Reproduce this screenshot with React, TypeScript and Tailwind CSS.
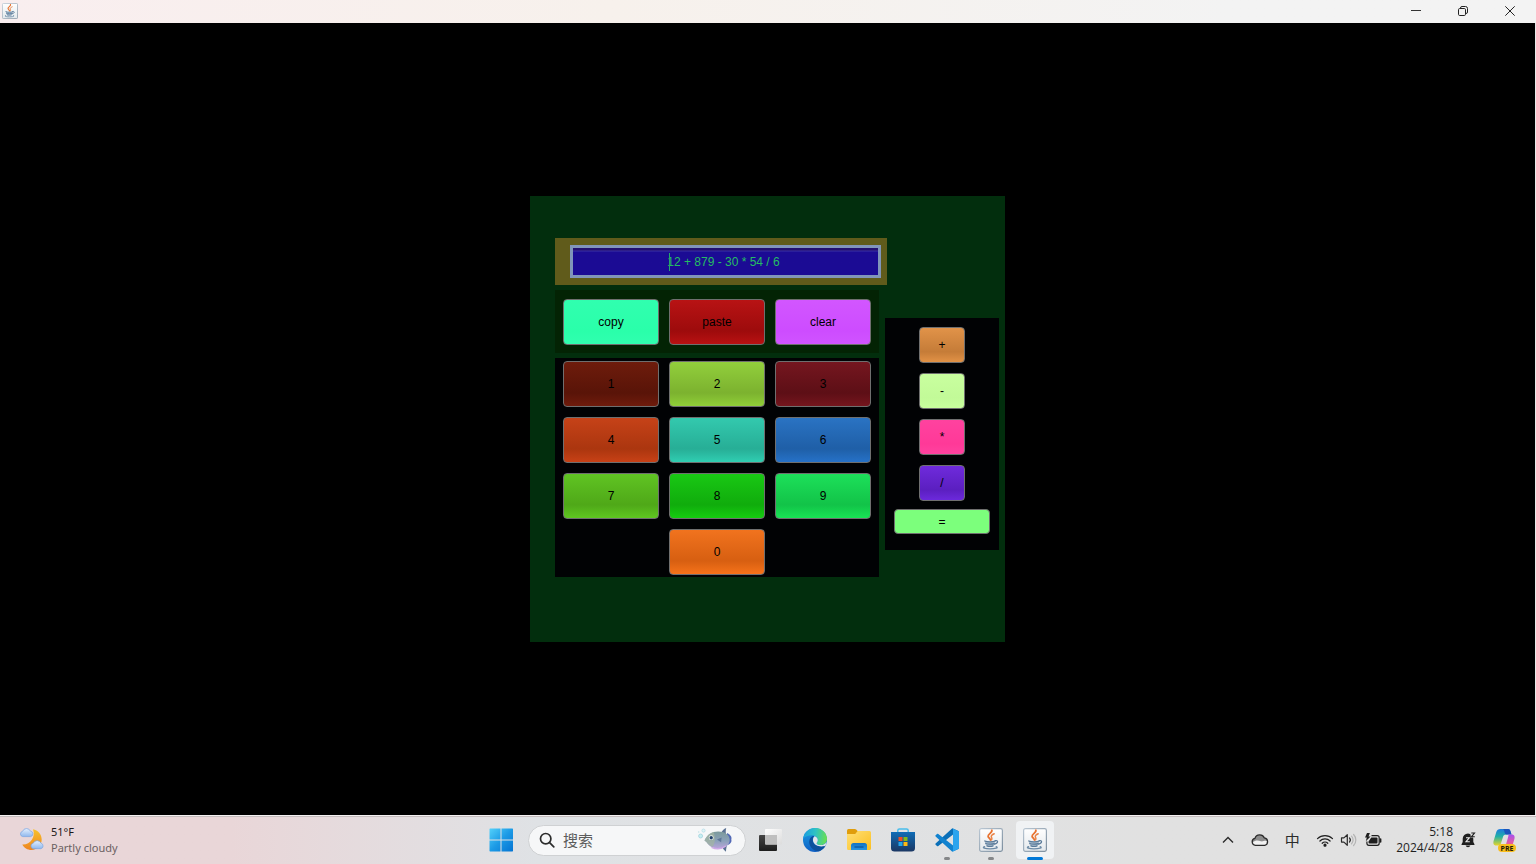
import { useState } from "react";
import type { ReactNode } from "react";

function JavaIcon({ className }: { className: string }) {
  return (
    <svg viewBox="0 0 24 24" className={className} aria-hidden="true">
      <defs>
        <linearGradient id="javaBg" x1="0" y1="0" x2="0" y2="1">
          <stop offset="0" stopColor="#ffffff" />
          <stop offset="1" stopColor="#e3e8ec" />
        </linearGradient>
        <linearGradient id="javaEdge" x1="0" y1="0" x2="1" y2="1">
          <stop offset="0" stopColor="#b9c6d2" />
          <stop offset="1" stopColor="#7d8f9f" />
        </linearGradient>
      </defs>
      <rect x=".6" y=".6" width="22.8" height="22.8" rx="1.8" fill="url(#javaBg)" stroke="url(#javaEdge)" strokeWidth="1.200" />
      <path d="M12.800 2.200c1.100 2.400-4 3.700-3.700 6.100.2 1.500 2 2.200 2.400 3.700" fill="none" stroke="#e8722f" strokeWidth="1.800" strokeLinecap="round" />
      <path d="M15.200 5.800c-2 .9-3.500 1.900-2.800 3.300.5 1 .9 1.500.2 2.700" fill="none" stroke="#ea8448" strokeWidth="1.500" strokeLinecap="round" />
      <path d="M5.800 12.800c2 1.200 8.600 1.200 10.400 0-.1 2.700-.9 4.600-2.300 5.600H8.100c-1.400-1-2.200-2.900-2.300-5.600z" fill="#a9bccd" />
      <path d="M5.800 13c2.200 1.100 8.200 1.100 10.400 0M6.800 15.500c1.900.8 6.500.8 8.400.1M8 17.900c1.700.6 4.400.6 6 0" fill="none" stroke="#5b7b9a" strokeWidth="1.300" strokeLinecap="round" />
      <path d="M16.200 12.700c3.100-.8 3.400 2.500-.7 3.500" fill="none" stroke="#5b7b9a" strokeWidth="1.300" strokeLinecap="round" />
      <path d="M5.600 18.700c-3.200 1 .5 2.100 5.400 2.100s9.200-.9 6.200-2.200" fill="none" stroke="#6c8aa6" strokeWidth="1.300" strokeLinecap="round" />
    </svg>
  );
}

function WeatherIcon() {
  return (
    <svg viewBox="0 0 26 24" className="h-6 w-[26px]" aria-hidden="true">
      <defs>
        <linearGradient id="moon" x1="0" y1="0" x2="0" y2="1">
          <stop offset="0" stopColor="#f7c22c" />
          <stop offset="1" stopColor="#ee8420" />
        </linearGradient>
        <linearGradient id="cloud" x1="0" y1="0" x2="0" y2="1">
          <stop offset="0" stopColor="#e6f0fd" />
          <stop offset="1" stopColor="#8fb8ee" />
        </linearGradient>
      </defs>
      <path d="M14 1.300c5 .8 8.700 5.100 8.700 10.300 0 5.800-4.500 10.400-10.200 10.400-4 0-7.500-2.200-9.200-5.500C11 17 17 9.500 14 1.300z" fill="url(#moon)" />
      <path d="M3.700 8.600a2.700 2.700 0 0 1-.1-5.300 4.200 4.200 0 0 1 7.800-.2 2.800 2.800 0 0 1 .3 5.500z" fill="url(#cloud)" stroke="#79a5e3" strokeWidth=".7" />
      <path d="M14.300 20.700a2.800 2.800 0 0 1-.1-5.500 4.300 4.300 0 0 1 7.900.1 2.800 2.800 0 0 1-.2 5.400z" fill="url(#cloud)" stroke="#79a5e3" strokeWidth=".7" />
    </svg>
  );
}

function WindowsIcon() {
  return (
    <svg viewBox="0 0 24 24" className="size-6" aria-hidden="true">
      <defs>
        <linearGradient id="win" gradientUnits="userSpaceOnUse" x1="0" y1="0" x2="24" y2="24">
          <stop offset="0" stopColor="#56d3fb" />
          <stop offset=".5" stopColor="#1c9be6" />
          <stop offset="1" stopColor="#0473d2" />
        </linearGradient>
      </defs>
      <path fill="url(#win)" d="M1 .5h10.500v11H.5V1zM12.500.5H23.500l.500.5v10.500H12.500zM.5 12.500h11v11H1L.5 23zM12.500 12.500H24V23l-.5.5h-11z" />
    </svg>
  );
}

function FishIcon() {
  return (
    <svg viewBox="0 0 36 26" className="h-[26px] w-9 shrink-0" aria-hidden="true">
      <defs>
        <linearGradient id="fish" x1="0" y1="0" x2="0" y2="1">
          <stop offset="0" stopColor="#7c9a9b" />
          <stop offset=".55" stopColor="#8aa1ba" />
          <stop offset="1" stopColor="#b9a5da" />
        </linearGradient>
      </defs>
      <path d="M24 6.500c1-2.800 2.900-4.600 5.200-5.500-.7 2.600-.5 5.200 0 7.200zM25 18.500c.7 2.800 2 4.900 4 6.300 0-3 .6-5.100 1-6.600z" fill="#5c7294" />
      <path d="M30 6c4.200 2 5 4.400 4.300 6.500.7 2.400-.6 4.600-4.300 5.700z" fill="#5269b6" />
      <path d="M7.500 13.500C10 7.500 15 4.500 21 4.400c6.500-.1 11.800 3.300 11.700 8.600C32.600 18.700 27 22 20.300 21.500c-6.100-.4-9-3.500-10.700-6.300z" fill="url(#fish)" />
      <path d="M7.500 13.500c1.800-4.400 5-7.300 9-8.500 2.200 4.700 1.800 11-1 15-3-1.200-4.700-3-5.900-4.800z" fill="#a2b4a3" opacity=".75" />
      <path d="M20 12.500l4.600-2-.5 4.700z" fill="#5f7799" />
      <path d="M14.500 20.300c4.800 2.100 10.600 1.400 14.300-1.300" fill="none" stroke="#cfa9e8" strokeWidth="1.400" />
      <circle cx="14.200" cy="10.700" r="2.400" fill="#f0f4ee" />
      <circle cx="14.200" cy="10.700" r="1.700" fill="#20406c" />
      <circle cx="3.600" cy="9" r="2" fill="#c7eef0" stroke="#9bd0dc" strokeWidth=".7" />
      <circle cx="6.500" cy="3.600" r="1.600" fill="#dff5f4" stroke="#a9d4e4" strokeWidth=".6" />
      <circle cx="1.700" cy="5" r=".8" fill="#c3e3e6" />
    </svg>
  );
}

function TaskViewIcon() {
  return (
    <svg viewBox="0 0 26 26" className="size-[26px]" aria-hidden="true">
      <defs>
        <linearGradient id="tvDark" x1="0" y1="0" x2="0" y2="1">
          <stop offset="0" stopColor="#454545" />
          <stop offset="1" stopColor="#1d1d1d" />
        </linearGradient>
        <linearGradient id="tvLight" x1="0" y1="0" x2="1" y2="1">
          <stop offset="0" stopColor="#ffffff" />
          <stop offset="1" stopColor="#dcdcdc" />
        </linearGradient>
      </defs>
      <rect x="1" y="8" width="18" height="16" rx="1" fill="url(#tvDark)" />
      <rect x="7" y="2" width="17" height="15.500" rx="1" fill="url(#tvLight)" />
      <path d="M7 8h12v9.500H8q-1 0-1-1z" fill="#bfbfbf" />
    </svg>
  );
}

function EdgeIcon() {
  return (
    <svg viewBox="0 0 24 24" className="size-6" aria-hidden="true">
      <defs>
        <linearGradient id="edgeTop" x1="0" y1=".4" x2="1" y2=".5">
          <stop offset="0" stopColor="#1a9de0" />
          <stop offset=".5" stopColor="#2fc3c3" />
          <stop offset="1" stopColor="#6be04f" />
        </linearGradient>
        <linearGradient id="edgeSide" x1="0" y1="0" x2="0" y2="1">
          <stop offset="0" stopColor="#1ba0e4" />
          <stop offset="1" stopColor="#0f5fc4" />
        </linearGradient>
      </defs>
      <circle cx="12" cy="12" r="12" fill="url(#edgeSide)" />
      <path d="M.1 11C.8 4.700 6 0 12.200 0 18.800 0 24 5 24 10.800c0 3.900-2.900 6.300-6.200 6.300-2.800 0-4.200-1-4.200-1.900 0-.7 1.200-1.200 1.200-3.200 0-2.500-2.400-4.800-5.800-4.800C5.200 7.200 1.800 8.400.1 11z" fill="url(#edgeTop)" />
      <path d="M9.800 8.100C6.500 9.900 5.800 13.300 6.500 16c1 4 4.700 7.200 9.200 7.300 2.700-1 4.900-2.700 6.500-5.100.3-.5-.1-.8-.6-.6-5 2-10.500-.1-11.600-3.900-.6-2.100-.1-4.200 1.300-5.400z" fill="#0c4f9c" />
      <path d="M13.600 15.200c0 .9 1.400 1.900 4.200 1.900 2.300 0 4.700-1.200 5.800-3.200a12 12 0 0 1-1.300 4.100c-.2.400-.7.300-1 .1-4.600 1.200-9.900-.6-11.100-4.500-.6-2.100 0-4.300 1.400-5.400 1.900.6 3.200 2.200 3.200 3.800 0 2-1.200 2.500-1.200 3.200z" fill="#e2e5e9" />
    </svg>
  );
}

function FolderIcon() {
  return (
    <svg viewBox="0 0 26 24" className="h-6 w-[26px]" aria-hidden="true">
      <defs>
        <linearGradient id="folder" x1="0" y1="0" x2="1" y2="1">
          <stop offset="0" stopColor="#ffdf76" />
          <stop offset="1" stopColor="#fbbf1f" />
        </linearGradient>
        <linearGradient id="folderBlue" x1="0" y1="0" x2="0" y2="1">
          <stop offset="0" stopColor="#1173c4" />
          <stop offset="1" stopColor="#2695e0" />
        </linearGradient>
      </defs>
      <path d="M1 2.500Q1 1 2.500 1h6.300q.8 0 1.400.6L12 3.500V8H1z" fill="#e09d0c" />
      <path d="M1 6h8.200l2-2.500q.4-.5 1-.5h11.300Q25 3 25 4.500v16q0 1.500-1.500 1.500h-21Q1 22 1 20.500z" fill="url(#folder)" />
      <path d="M5 22v-4.500Q5 15 7.500 15h11q2.500 0 2.500 2.500V22z" fill="url(#folderBlue)" />
      <path d="M9 19h8" stroke="#0c5da7" strokeWidth="1.500" strokeLinecap="round" />
    </svg>
  );
}

function StoreIcon() {
  return (
    <svg viewBox="0 0 26 26" className="size-[26px]" aria-hidden="true">
      <defs>
        <linearGradient id="store" x1="0" y1="0" x2="0" y2="1">
          <stop offset="0" stopColor="#0f6cb6" />
          <stop offset="1" stopColor="#1b3763" />
        </linearGradient>
      </defs>
      <path d="M7.800 6V3.600Q7.800 2 9.400 2h7.200q1.600 0 1.600 1.600V6" fill="none" stroke="#48bdeb" strokeWidth="1.500" />
      <path d="M1 5h24v16q0 3.500-3.500 3.500h-17Q1 24.500 1 21z" fill="url(#store)" />
      <path d="M8.500 10h4v4h-4z" fill="#f04e23" />
      <path d="M13.500 10h4v4h-4z" fill="#80ba1b" />
      <path d="M8.500 15h4v4h-4z" fill="#23a6ee" />
      <path d="M13.500 15h4v4h-4z" fill="#fdb813" />
    </svg>
  );
}

function CodeIcon() {
  return (
    <svg viewBox="0 0 24 24" className="size-6" aria-hidden="true">
      <path d="M17.300.2 23 2.800q1 .5 1 1.500L17.800 6.800 3.300 18.100q-.5.400-1 .1L.6 16.700q-.6-.6 0-1.200z" fill="#0a6fb8" />
      <path d="M17.300 23.800 23 21.200q1-.5 1-1.500l-6.200-2.500L3.300 5.900q-.5-.4-1-.1L.6 7.300q-.6.6 0 1.200z" fill="#1182cf" />
      <path d="M17.300 23.800c.5-.3.700-.7.700-1.200V1.400c0-.5-.2-.9-.7-1.200L23 2.900q1 .5 1 1.500v15.200q0 1-1 1.500z" fill="#2ba4ee" />
    </svg>
  );
}

function TrayCloud() {
  return (
    <svg viewBox="0 0 18 14" className="h-[14px] w-[18px]" aria-hidden="true">
      <path d="M4.400 12.300a3.500 3.500 0 0 1-.5-6.900 5.100 5.100 0 0 1 9.500-.5 3.800 3.800 0 0 1 .4 7.400z" fill="#f2f2f2" />
      <path d="M3.900 5.400a5.100 5.100 0 0 1 9.500-.5c1.600 0 2.900 1.200 3.300 3.200-3.400-1.200-4.700.9-6.800.2C7.500 7.500 5 6.500 1.500 9.400 1 7.400 2 5.800 3.900 5.400z" fill="#8c8c8c" />
      <path d="M4.400 12.300a3.500 3.500 0 0 1-.5-6.900 5.100 5.100 0 0 1 9.500-.5 3.800 3.800 0 0 1 .4 7.400z" fill="none" stroke="#2b2b2b" strokeWidth="1.300" />
    </svg>
  );
}

function WifiIcon() {
  return (
    <svg viewBox="0 0 18 14" className="h-[14px] w-[18px]" aria-hidden="true" fill="none" stroke="#1f1f1f" strokeWidth="1.200" strokeLinecap="round">
      <path d="M1.500 5.600a10.700 10.700 0 0 1 15 0M3.900 8a7.300 7.300 0 0 1 10.200 0M6.200 10.300a4 4 0 0 1 5.600 0" />
      <circle cx="9" cy="12.200" r="1" fill="#1f1f1f" />
    </svg>
  );
}

function SpeakerIcon() {
  return (
    <svg viewBox="0 0 18 14" className="h-[14px] w-[18px]" aria-hidden="true" fill="none" strokeWidth="1.200" strokeLinecap="round" strokeLinejoin="round">
      <path d="M1.500 4.900h2.400L7.300 1.700v10.600L3.900 9.100H1.500z" stroke="#2b2b2b" />
      <path d="M9.500 5a3 3 0 0 1 0 4" stroke="#2b2b2b" />
      <path d="M11.500 3.200a5.400 5.400 0 0 1 0 7.600M13.600 1.500a7.900 7.900 0 0 1 0 11" stroke="#b4b4b4" />
    </svg>
  );
}

function BatteryIcon() {
  return (
    <svg viewBox="0 0 18 14" className="h-[14px] w-[18px]" aria-hidden="true">
      <path d="M7.500 2.700h5.700q2 0 2 2v5.600q0 2-2 2H4.900q-2 0-2-2V8.600" fill="none" stroke="#1f1f1f" strokeWidth="1.200" />
      <path d="M7.300 4.400h5.200q1 0 1 1v4.200q0 1-1 1h-7q-1 0-1-1V8.400z" fill="#1f1f1f" />
      <path d="M16.600 6v3" stroke="#1f1f1f" strokeWidth="1.600" strokeLinecap="round" />
      <path d="M3 0 1 4.600h1.800L1.800 8.200 6.600 3.500H4.500L5.900 0z" fill="#1f1f1f" />
    </svg>
  );
}

function BellIcon() {
  return (
    <svg viewBox="0 0 16 18" className="h-[18px] w-4" aria-hidden="true">
      <path d="M7 2.500a5.300 5.300 0 0 0-5.300 5.300V11L.5 13.300q-.2.600.4.700h12.200q.6-.1.400-.7L12.300 11V7.800A5.300 5.300 0 0 0 7 2.500z" fill="#1f1f1f" />
      <path d="M4.600 14.500a2.500 2.500 0 0 0 4.800 0z" fill="#1f1f1f" />
      <path d="M9.300 1H15v5.500h-5.200z" fill="#e1e1e1" />
      <path d="M10.300 2h3.200l-3.100 3.800h3.400" fill="none" stroke="#1f1f1f" strokeWidth="1.100" />
      <path d="M5 6.700h3.400L5 10.700h3.800" fill="none" stroke="#ececec" strokeWidth="1.100" />
    </svg>
  );
}

function CopilotIcon() {
  return (
    <span className="relative block h-6 w-6">
      <svg viewBox="0 0 24 24" className="size-6" aria-hidden="true">
        <defs>
          <linearGradient id="copA" x1="0" y1="0" x2="0" y2="1">
            <stop offset="0" stopColor="#1d79df" />
            <stop offset=".45" stopColor="#20b0a6" />
            <stop offset="1" stopColor="#e8d52a" />
          </linearGradient>
          <linearGradient id="copB" x1="0" y1="0" x2="0" y2="1">
            <stop offset="0" stopColor="#a84fee" />
            <stop offset=".6" stopColor="#ee5f92" />
            <stop offset="1" stopColor="#f89a55" />
          </linearGradient>
        </defs>
        <path d="M8.500 1h7.600c1.200 0 2 .8 2.300 2l1.100 3.600H14c-1.800 0-2.600 1-3.100 2.600l-2 6.300c-.4 1.300-1.200 2-2.500 2H4.200C1.500 17.500 1 15.300 1.600 13l2.700-9C4.900 2 6.200 1 8.500 1z" fill="url(#copA)" />
        <path d="M11 1h5.100c1.200 0 2 .8 2.300 2l1.100 3.600H15c-1.400 0-2-.7-2.300-1.900C12.300 3 12 1.600 11 1z" fill="#1b55bd" />
        <path d="M16.300 6.600h3.500c2.700 0 3.200 2.200 2.600 4.500l-2.700 9c-.6 2-1.900 3-4.200 3H9.700c2 0 2.700-1.400 3.100-2.900l3-10c.4-1.400.9-2.600.5-3.600z" fill="url(#copB)" />
      </svg>
      <span className="absolute left-[6px] top-[16px] flex h-[8px] w-[18px] items-center justify-center rounded-sm bg-[#f9bd1c] text-[7px] font-bold leading-none text-[#241c05]">
        PRE
      </span>
    </span>
  );
}

function Key({ label, tone, onClick }: { label: string; tone: string; onClick: () => void }) {
  return (
    <button
      type="button"
      onClick={onClick}
      className={`flex items-center justify-center rounded-[4px] border border-[#6f6f6f] text-xs text-black ${tone}`}
    >
      {label}
    </button>
  );
}

const big = "h-[46px] w-24 bg-linear-to-b";
const digits = [
  { label: "1", tone: `${big} from-[#6e1c0c] via-[#591408] via-70% to-[#6f1b0c]` },
  { label: "2", tone: `${big} from-[#92cf3c] via-[#7cb22f] via-70% to-[#90cf38]` },
  { label: "3", tone: `${big} from-[#75161f] via-[#5d0f16] via-70% to-[#75151d]` },
  { label: "4", tone: `${big} from-[#c64218] via-[#ab360f] via-70% to-[#c84116]` },
  { label: "5", tone: `${big} from-[#33c9ae] via-[#27ae96] via-70% to-[#30ceb2]` },
  { label: "6", tone: `${big} from-[#2a73c3] via-[#1f5fa7] via-70% to-[#2672c8]` },
  { label: "7", tone: `${big} from-[#60c423] via-[#4fa818] via-70% to-[#5fc721]` },
  { label: "8", tone: `${big} from-[#19c814] via-[#10ac0c] via-70% to-[#15cd10]` },
  { label: "9", tone: `${big} from-[#1de05a] via-[#12c348] via-70% to-[#18e455]` },
  { label: "0", tone: `${big} col-start-2 from-[#f1731e] via-[#d75f11] via-70% to-[#f6731a]` },
];

const op = "h-9 w-[46px] bg-linear-to-b";
const operators = [
  { label: "+", tone: `${op} from-[#e19349] via-[#c57c38] via-70% to-[#e29246]` },
  { label: "-", tone: `${op} from-[#c9ff9f] via-[#c2fa98] via-70% to-[#c8ff9d]` },
  { label: "*", tone: `${op} from-[#ff429f] via-[#ff3998] via-70% to-[#ff429f]` },
  { label: "/", tone: `${op} from-[#6f2bdc] via-[#5b1fc0] via-70% to-[#6c29dc]` },
];

function Calculator() {
  const [text, setText] = useState("12 + 879 - 30 * 54 / 6");

  const evaluate = () => {
    const parts = text.split(/\s+/).filter(Boolean);
    const sums: number[] = [Number(parts[0] ?? 0)];
    for (let i = 1; i < parts.length; i += 2) {
      const value = Number(parts[i + 1]);
      if (parts[i] === "+") sums.push(value);
      else if (parts[i] === "-") sums.push(-value);
      else if (parts[i] === "*") sums.push((sums.pop() ?? 0) * value);
      else sums.push((sums.pop() ?? 0) / value);
    }
    setText(String(sums.reduce((a, b) => a + b, 0)));
  };

  return (
    <section className="flex w-[475px] items-start gap-1.5 bg-[#022e0d] pb-[65px] pl-[25px] pr-1.5 pt-[42px] font-['Liberation_Sans',Arial,sans-serif]">
      <div className="flex w-[324px] shrink-0 flex-col gap-[5px]">
        <div className="w-[332px] bg-[#605b1b] py-[7px] pl-[15px] pr-1.5">
          <div className="relative">
            <input
              aria-label="Expression"
              value={text}
              onChange={(e) => setText(e.target.value)}
              className="block h-[33px] w-full border-[3px] border-[#8095ba] bg-[#1b0b94] bg-linear-to-b from-[#22106f] from-[2px] via-[#3c2ca4] via-[3px] to-[#1b0b94] to-[4px] pr-1 text-center text-xs text-[#25bd63] outline-none"
            />
            <span className="absolute left-[99px] top-2 h-[18px] w-px bg-[#25a56b]" />
          </div>
        </div>
        <div className="grid grid-cols-3 gap-x-2.5 bg-[#032304] px-2 pb-2 pt-[9px]">
          <Key label="copy" tone={`${big} from-[#30ffaf] via-[#2affaa] via-70% to-[#30ffaf]`} onClick={() => void navigator.clipboard?.writeText(text)} />
          <Key label="paste" tone={`${big} from-[#b81314] via-[#9d0b0c] via-70% to-[#b91112]`} onClick={() => void navigator.clipboard?.readText().then(setText)} />
          <Key label="clear" tone={`${big} from-[#d256ff] via-[#cd4cff] via-70% to-[#d054ff]`} onClick={() => setText("")} />
        </div>
        <div className="grid grid-cols-3 gap-2.5 bg-[#010204] px-2 pb-0.5 pt-[3px]">
          {digits.map((d) => (
            <Key key={d.label} label={d.label} tone={d.tone} onClick={() => setText(text + d.label)} />
          ))}
        </div>
      </div>
      <div className="mt-20 flex w-[114px] shrink-0 flex-col items-center gap-2 bg-[#010204] pb-4 pt-[9px]">
        <div className="flex flex-col gap-2.5">
          {operators.map((o) => (
            <Key key={o.label} label={o.label} tone={o.tone} onClick={() => setText(`${text} ${o.label} `)} />
          ))}
        </div>
        <Key label="=" tone="h-[25px] w-24 bg-[#7cff7c]" onClick={evaluate} />
      </div>
    </section>
  );
}

function TaskButton({ label, children, state }: { label: string; children: ReactNode; state?: "open" | "active" }) {
  return (
    <button
      type="button"
      aria-label={label}
      className={`relative flex h-[38px] w-[38px] items-center justify-center rounded ${state === "active" ? "bg-[#f0f2f4]" : ""}`}
    >
      {children}
      {state === "open" && <span className="absolute -bottom-px left-4 h-[3px] w-1.5 rounded-full bg-[#858789]" />}
      {state === "active" && <span className="absolute -bottom-px left-[11px] h-[3px] w-4 rounded-full bg-[#0078d7]" />}
    </button>
  );
}

function TitleBar() {
  return (
    <header className="flex h-[23px] items-center justify-between bg-linear-to-r from-[#f9eeef] via-[#f7f1ec] via-40% to-[#f3f3f3] to-80% pb-px pl-0.5">
      <JavaIcon className="size-4" />
      <div className="flex self-stretch">
        <button type="button" aria-label="Minimize" className="flex w-[46px] items-center justify-center">
          <svg viewBox="0 0 10 10" className="size-2.5" aria-hidden="true"><path d="M0 4.500h10" stroke="#333" /></svg>
        </button>
        <button type="button" aria-label="Restore" className="flex w-[47px] items-center justify-center">
          <svg viewBox="0 0 10 10" className="size-2.5" aria-hidden="true" fill="none" stroke="#222">
            <rect x=".5" y="2.500" width="7" height="7" rx="1.200" />
            <path d="M2.500 2.500v-.5Q2.500.5 4 .5h3.500q2 0 2 2V6q0 1.500-1.500 1.500" />
          </svg>
        </button>
        <button type="button" aria-label="Close" className="mr-[3px] flex w-[47px] items-center justify-center">
          <svg viewBox="0 0 10 10" className="size-2.5" aria-hidden="true"><path d="m.3.3 9.400 9.400M9.700.3.3 9.700" stroke="#222" /></svg>
        </button>
      </div>
    </header>
  );
}

function Taskbar() {
  return (
    <footer className="grid h-[49px] grid-cols-[1fr_auto_1fr] items-center border-t border-[#f4f0f1] bg-linear-to-r from-[#e9d6d8] from-15% via-[#dfe2e5] via-35% to-[#e1e1e1] to-75% font-['Open_Sans','Noto_Sans',sans-serif] text-xs leading-4 shadow-[inset_0_1px_0_#c4bcbd]">
      <div className="flex items-center gap-1.5 pl-[19px]">
        <WeatherIcon />
        <div className="font-['Noto_Sans',sans-serif] text-[11px]">
          <div className="text-[#1c1819]">51°F</div>
          <div className="text-[#6b6162]">Partly cloudy</div>
        </div>
      </div>
      <div className="flex items-center gap-1.5">
        <TaskButton label="Start"><WindowsIcon /></TaskButton>
        <div className="ml-0.5 flex h-[31px] w-[218px] items-center rounded-full border border-[#cfd1d3] bg-[#f6f7f8] pl-2.5 pr-3">
          <svg viewBox="0 0 16 16" className="size-4 shrink-0" aria-hidden="true" fill="none" stroke="#2c2c2c" strokeWidth="1.700" strokeLinecap="round">
            <circle cx="6.700" cy="6.700" r="5.200" />
            <path d="m10.600 10.600 4.200 4.200" />
          </svg>
          <input
            aria-label="搜索"
            placeholder="搜索"
            className="ml-2 w-full min-w-0 bg-transparent font-['Noto_Sans_CJK_SC',sans-serif] text-[15px] text-[#5c5c5c] outline-none placeholder:text-[#5c5c5c]"
          />
          <FishIcon />
        </div>
        <TaskButton label="Task view"><TaskViewIcon /></TaskButton>
        <TaskButton label="Edge"><EdgeIcon /></TaskButton>
        <TaskButton label="Files"><FolderIcon /></TaskButton>
        <TaskButton label="Store"><StoreIcon /></TaskButton>
        <TaskButton label="Code" state="open"><CodeIcon /></TaskButton>
        <TaskButton label="Java" state="open"><JavaIcon className="size-6" /></TaskButton>
        <TaskButton label="Java calculator" state="active"><JavaIcon className="size-6" /></TaskButton>
      </div>
      <div className="flex items-center justify-end pr-5">
        <button type="button" aria-label="Show hidden icons" className="flex w-8 justify-center">
          <svg viewBox="0 0 12 8" className="h-2 w-3" aria-hidden="true" fill="none" stroke="#2b2b2b" strokeWidth="1.400"><path d="m1 6.500 5-5 5 5" /></svg>
        </button>
        <button type="button" aria-label="Cloud storage" className="flex w-8 justify-center"><TrayCloud /></button>
        <button type="button" aria-label="Input method" className="flex w-8 justify-center font-['Noto_Sans_CJK_SC',sans-serif] text-[15px] text-[#2b2b2b]">中</button>
        <button type="button" aria-label="Network, volume and battery" className="ml-2 mr-[14px] flex gap-1.5">
          <WifiIcon />
          <SpeakerIcon />
          <BatteryIcon />
        </button>
        <div className="text-right text-[#1f1f1f]">
          <div>5:18</div>
          <div>2024/4/28</div>
        </div>
        <button type="button" aria-label="Notifications" className="ml-2 mr-[15px]"><BellIcon /></button>
        <button type="button" aria-label="Copilot"><CopilotIcon /></button>
      </div>
    </footer>
  );
}

export default function App() {
  return (
    <div className="flex min-h-screen flex-col bg-black">
      <TitleBar />
      <main className="flex flex-1 items-center justify-center border-r border-[#e8e8e8] bg-black">
        <Calculator />
      </main>
      <Taskbar />
    </div>
  );
}
